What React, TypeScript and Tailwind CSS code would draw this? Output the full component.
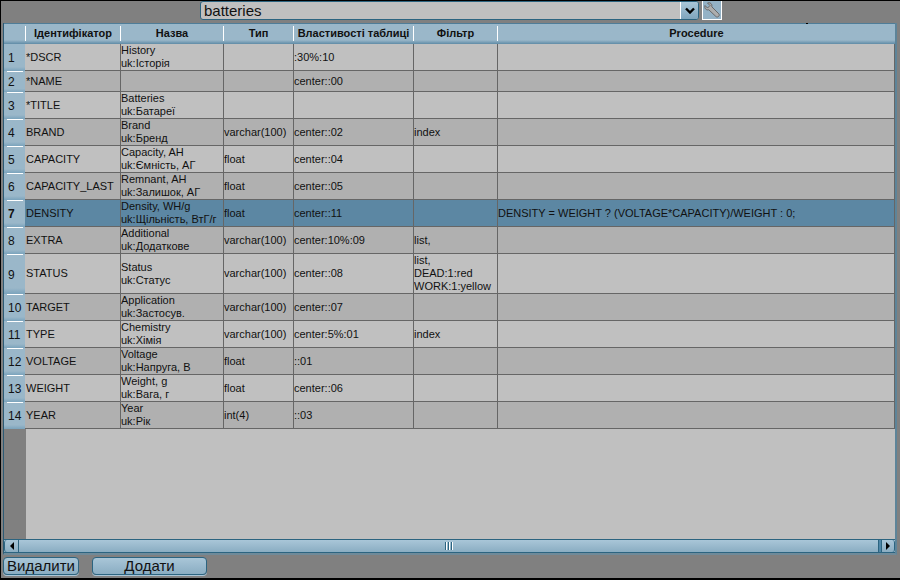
const rows = [
  { n: 1, h: "h-[27px]", id: "*DSCR", name: ["History", "uk:Історія"], type: "", props: ":30%:10", filter: [] as string[], proc: "" },
  { n: 2, h: "h-[21px]", id: "*NAME", name: [], type: "", props: "center::00", filter: [], proc: "" },
  { n: 3, h: "h-[27px]", id: "*TITLE", name: ["Batteries", "uk:Батареї"], type: "", props: "", filter: [], proc: "" },
  { n: 4, h: "h-[27px]", id: "BRAND", name: ["Brand", "uk:Бренд"], type: "varchar(100)", props: "center::02", filter: ["index"], proc: "" },
  { n: 5, h: "h-[27px]", id: "CAPACITY", name: ["Capacity, AH", "uk:Ємність, АГ"], type: "float", props: "center::04", filter: [], proc: "" },
  { n: 6, h: "h-[27px]", id: "CAPACITY_LAST", name: ["Remnant, AH", "uk:Залишок, АГ"], type: "float", props: "center::05", filter: [], proc: "" },
  { n: 7, h: "h-[27px]", id: "DENSITY", name: ["Density, WH/g", "uk:Щільність, ВтГ/г"], type: "float", props: "center::11", filter: [], proc: "DENSITY = WEIGHT ? (VOLTAGE*CAPACITY)/WEIGHT : 0;" },
  { n: 8, h: "h-[27px]", id: "EXTRA", name: ["Additional", "uk:Додаткове"], type: "varchar(100)", props: "center:10%:09", filter: ["list,"], proc: "" },
  { n: 9, h: "h-[40px]", id: "STATUS", name: ["Status", "uk:Статус"], type: "varchar(100)", props: "center::08", filter: ["list,", "DEAD:1:red", "WORK:1:yellow"], proc: "" },
  { n: 10, h: "h-[27px]", id: "TARGET", name: ["Application", "uk:Застосув."], type: "varchar(100)", props: "center::07", filter: [], proc: "" },
  { n: 11, h: "h-[27px]", id: "TYPE", name: ["Chemistry", "uk:Хімія"], type: "varchar(100)", props: "center:5%:01", filter: ["index"], proc: "" },
  { n: 12, h: "h-[27px]", id: "VOLTAGE", name: ["Voltage", "uk:Напруга, В"], type: "float", props: "::01", filter: [], proc: "" },
  { n: 13, h: "h-[27px]", id: "WEIGHT", name: ["Weight, g", "uk:Вага, г"], type: "float", props: "center::06", filter: [], proc: "" },
  { n: 14, h: "h-[27px]", id: "YEAR", name: ["Year", "uk:Рік"], type: "int(4)", props: "::03", filter: [], proc: "" },
];

const headers = ["Ідентифікатор", "Назва", "Тип", "Властивості таблиці", "Фільтр", "Procedure"];
const cell = "flex flex-col justify-center border-r border-b border-[#666] leading-[13px] overflow-hidden whitespace-nowrap";
const btn = "flex items-center justify-center rounded-[4px] border border-[#2c6480] shadow-[0_1px_0_#a9c6d8] bg-gradient-to-b from-[#a9c6d8] to-[#8aadc2] text-[15px] leading-[16px] text-[#111]";

export default function App() {
  return (
    <div className="w-[900px] h-[580px] flex flex-col bg-[#808080] border-t border-l border-b-2 border-black overflow-hidden font-['Liberation_Sans',sans-serif] text-[11px] text-[#111]">
      {/* Top toolbar */}
      <div className="h-[22px] flex items-start pl-[199px] shrink-0">
        <div className="w-[499px] h-[19px] flex rounded-[3px] border border-[#2c6480] bg-[#c0c0c0] overflow-hidden">
          <div className="flex-1 pl-[3px] text-[15px] leading-[17px]">batteries</div>
          <div className="w-[18px] flex items-center justify-center border-l border-l-white bg-gradient-to-b from-[#a9c6d8] to-[#7fa5bd]">
            <svg width="10" height="7" viewBox="0 0 10 7">
              <path d="M1 1.5 L5 5.5 L9 1.5" fill="none" stroke="#000" strokeWidth="2.4" />
            </svg>
          </div>
        </div>
        <div className="ml-[3px] -mt-px w-[20px] h-[20px] flex items-center justify-center border border-t-0 border-white bg-[#94b2c6]">
          <svg width="18" height="18" viewBox="0 0 18 18">
            <path d="M2 4.5 L4.5 7 L7 4.5 L4.5 2 C7 1 9.5 3 8.8 5.8 L15.8 12.8 C16.6 13.8 16.2 15 15.4 15.6 C14.6 16.2 13.6 16.2 12.8 15.4 L5.8 8.8 C3.5 9.5 1 7.5 2 4.5 Z" fill="#adadad" stroke="#606060" strokeWidth="0.9" strokeLinejoin="round" />
          </svg>
        </div>
      </div>

      {/* Data grid */}
      <div className="w-[894px] ml-[2px] h-[532px] flex flex-col bg-[#c0c0c0] border-l border-l-[#2c5a74] border-r-2 border-r-[#5d8499] border-b-2 border-b-[#6f8a99] shrink-0">
        <div className="relative grid grid-cols-[21px_95px_103px_70px_120px_84px_1fr] h-[21px] shrink-0 bg-gradient-to-b from-[#9ab7c9] from-80% to-[#5f8ba6] border-t border-[#4f7d98]">
          <div />
          {headers.map((h) => (
            <div key={h} className="flex items-center whitespace-nowrap overflow-hidden pb-px">
              <span className="w-px h-[15px] bg-white shrink-0" />
              <span className="flex-1 text-center font-bold">{h}</span>
            </div>
          ))}
          <span className="absolute -top-px left-[802px] w-[2px] h-px bg-black" />
        </div>

        {rows.map((r) => {
          const bg = r.n === 7 ? "bg-[#5c87a3]" : r.n % 2 === 0 ? "bg-[#b0b0b0]" : "bg-[#c0c0c0]";
          return (
            <div key={r.n} className={`grid grid-cols-[21px_96px_103px_70px_120px_84px_1fr] ${r.h} ${bg}`}>
              <div className="flex flex-col bg-gradient-to-b from-[#9ab7c9] from-85% to-[#7aa3bc]">
                {r.n > 1 ? <span className="h-px ml-[3px] mr-[2px] bg-white shrink-0" /> : null}
                <div className={`flex-1 flex items-center pl-[4px] text-[12px] ${r.n === 7 ? "font-bold" : ""}`}>
                  {r.n}
                </div>
              </div>
              <div className={`${cell} pl-px`}>{r.id}</div>
              <div className={cell}>
                {r.name.map((t) => (
                  <div key={t}>{t}</div>
                ))}
              </div>
              <div className={cell}>{r.type}</div>
              <div className={cell}>{r.props}</div>
              <div className={cell}>
                {r.filter.map((t) => (
                  <div key={t}>{t}</div>
                ))}
              </div>
              <div className={cell}>{r.proc}</div>
            </div>
          );
        })}

        {/* Empty space under the rows */}
        <div className="flex-1 flex min-h-0">
          <div className="w-[22px] bg-[#808080]" />
          <div className="flex-1" />
        </div>

        {/* Horizontal scrollbar */}
        <div className="h-[14px] flex shrink-0 items-stretch border-y border-[#2c6480] bg-gradient-to-b from-[#a9c6d8] to-[#8aadc2]">
          <div className="w-[15px] flex items-center justify-center border-l border-r border-[#2c6480] rounded-l-[3px]">
            <svg width="6" height="8" viewBox="0 0 6 8"><path d="M5 0 L1 4 L5 8 Z" fill="#000" /></svg>
          </div>
          <div className="flex-1 flex items-center justify-center gap-px">
            <span className="w-[2px] h-[8px] bg-white border-l border-[#2c6480]" />
            <span className="w-[2px] h-[8px] bg-white border-l border-[#2c6480]" />
            <span className="w-[2px] h-[8px] bg-white border-l border-[#2c6480]" />
          </div>
          <div className="w-[4px] bg-[#4f87a8] border-x border-[#2c6480]" />
          <div className="w-[13px] flex items-center justify-center border-r border-[#2c6480] rounded-r-[3px]">
            <svg width="6" height="8" viewBox="0 0 6 8"><path d="M1 0 L5 4 L1 8 Z" fill="#000" /></svg>
          </div>
        </div>
      </div>

      {/* Bottom buttons */}
      <div className="flex items-start pl-[2px] pt-[2px] gap-[13px]">
        <button className={`${btn} w-[76px] h-[18px]`}>Видалити</button>
        <button className={`${btn} w-[115px] h-[18px]`}>Додати</button>
      </div>
    </div>
  );
}
